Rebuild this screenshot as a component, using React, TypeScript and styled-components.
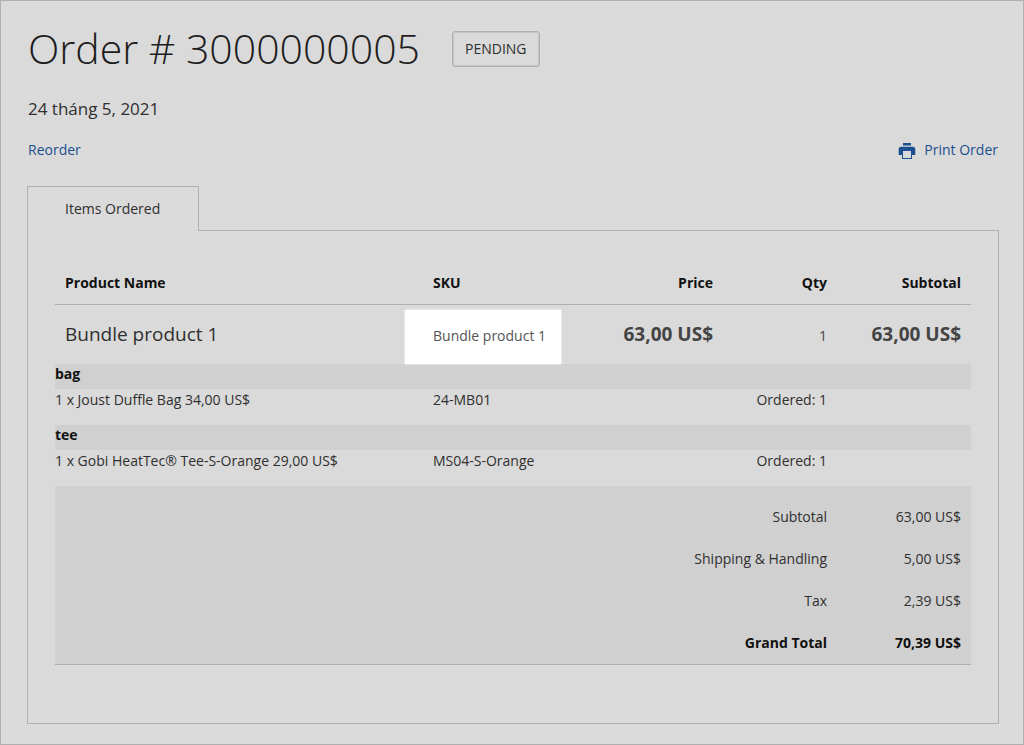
import React from "react";
import styled, { createGlobalStyle } from "styled-components";

const line = "#b0b0b0";
const shade = "#d0d0d0";
const link = "#1c4f8f";

const GlobalStyle = createGlobalStyle`
  *, *::before, *::after { box-sizing: border-box; }
  body {
    margin: 0;
    background: #dadada;
    color: #2f2f2f;
    font-family: "Open Sans", "Noto Sans", sans-serif;
    font-size: 14px;
    line-height: 22px;
  }
`;

const Page = styled.main`
  min-height: 100vh;
  padding: 19px 24px 20px 26px;
  border: 1px solid ${line};
`;

const Intro = styled.header`
  padding: 0 1px;
`;

const TitleRow = styled.div`
  display: flex;
  align-items: center;
  gap: 32px;
`;

const Title = styled.h1`
  margin: 0;
  padding-bottom: 2px;
  color: #1d1d1d;
  font-size: 41px;
  font-weight: 300;
  line-height: 56px;
`;

const Status = styled.span`
  padding: 5px 12px;
  border: 1px solid ${line};
  border-radius: 3px;
  box-shadow: inset 0 0 0 1px #c4c4c4;
  line-height: 24px;
  text-transform: uppercase;
`;

const OrderDate = styled.p`
  margin: 19px 0 18px;
  font-size: 17px;
  line-height: 24px;
`;

const Actions = styled.nav`
  display: flex;
  justify-content: space-between;
  align-items: center;
`;

const ActionLink = styled.a`
  display: inline-flex;
  align-items: center;
  gap: 7px;
  color: ${link};
  text-decoration: none;
`;

const PrintIcon = styled.svg`
  width: 20px;
  height: 20px;
  fill: currentColor;
`;

const Tabs = styled.div`
  display: flex;
  margin-top: 25px;
`;

const Tab = styled.button`
  height: 45px;
  margin-bottom: -1px;
  padding: 0 38px 0 37px;
  border: 1px solid ${line};
  border-bottom: 0;
  background: #dadada;
  color: inherit;
  font: inherit;
  z-index: 1;
`;

const Panel = styled.section`
  padding: 32px 27px 58px;
  border: 1px solid ${line};
`;

const OrderTable = styled.table`
  width: 100%;
  table-layout: fixed;
  border-collapse: collapse;
`;

const Col = styled.col<{ $width?: number }>`
  width: ${(p) => (p.$width ? `${p.$width}px` : "auto")};
`;

const HeadCell = styled.th<{ $end?: boolean }>`
  padding: 9px 10px 10px;
  border-bottom: 1px solid ${line};
  color: #111;
  font-weight: 700;
  text-align: ${(p) => (p.$end ? "right" : "left")};
`;

const ProductRow = styled.tr`
  height: 59px;
  vertical-align: baseline;
`;

const ProductCell = styled.td<{ $end?: boolean }>`
  padding: 16px 10px 17px;
  color: #444;
  text-align: ${(p) => (p.$end ? "right" : "left")};
`;

const ProductName = styled.strong`
  color: #2f2f2f;
  font-size: 19px;
  font-weight: 400;
  line-height: 26px;
`;

const Amount = styled.span`
  font-size: 19px;
  font-weight: 700;
  line-height: 26px;
`;

const Spotlight = styled.mark`
  position: relative;
  z-index: 0;
  background: none;
  color: #555;

  &::before {
    content: "";
    position: absolute;
    inset: -16px -15px -19px -28px;
    z-index: -1;
    background: #fff;
    box-shadow: 0 0 2px #fff;
  }
`;

const GroupCell = styled.th`
  height: 25px;
  padding: 0 0 5px;
  background: ${shade};
  color: #111;
  font-weight: 700;
  line-height: 20px;
  text-align: left;
`;

const OptionCell = styled.td<{ $inset?: boolean; $end?: boolean }>`
  height: 36px;
  padding: ${(p) => (p.$inset ? "0 10px 14px" : "0 0 14px")};
  text-align: ${(p) => (p.$end ? "right" : "left")};
  white-space: nowrap;
`;

const Totals = styled.tfoot`
  background: ${shade};
  border-bottom: 1px solid ${line};
`;

const TotalRow = styled.tr<{ $grand?: boolean }>`
  color: ${(p) => (p.$grand ? "#111" : "inherit")};
  font-weight: ${(p) => (p.$grand ? 700 : 400)};

  & > * {
    padding: 10px;
    font-weight: inherit;
    text-align: right;
  }

  &:first-child > * {
    padding-top: 20px;
  }
`;

const groups = [
  { label: "bag", item: "1 x Joust Duffle Bag 34,00 US$", sku: "24-MB01", qty: 1 },
  { label: "tee", item: "1 x Gobi HeatTec® Tee-S-Orange 29,00 US$", sku: "MS04-S-Orange", qty: 1 },
];

const totals = [
  { label: "Subtotal", value: "63,00 US$" },
  { label: "Shipping & Handling", value: "5,00 US$" },
  { label: "Tax", value: "2,39 US$" },
  { label: "Grand Total", value: "70,39 US$", grand: true },
];

export default function App() {
  return (
    <>
      <GlobalStyle />
      <Page>
        <Intro>
          <TitleRow>
            <Title>Order # 3000000005</Title>
            <Status>Pending</Status>
          </TitleRow>
          <OrderDate>24 tháng 5, 2021</OrderDate>
          <Actions>
            <ActionLink href="#reorder">Reorder</ActionLink>
            <ActionLink href="#print">
              <PrintIcon viewBox="0 0 20 20" aria-hidden="true">
                <path d="M6 3h8v2.500H6z" />
                <path
                  fillRule="evenodd"
                  d="M4 6.800h12c1.400 0 2.300 1 2.300 2.300V15H15v4H5v-4H1.700V9.100C1.700 7.800 2.600 6.800 4 6.800zM6 11v7h8v-7z"
                />
              </PrintIcon>
              Print Order
            </ActionLink>
          </Actions>
        </Intro>
        <Tabs>
          <Tab type="button">Items Ordered</Tab>
        </Tabs>
        <Panel>
          <OrderTable>
            <colgroup>
              <Col />
              <Col $width={170} />
              <Col $width={130} />
              <Col $width={114} />
              <Col $width={134} />
            </colgroup>
            <thead>
              <tr>
                <HeadCell scope="col">Product Name</HeadCell>
                <HeadCell scope="col">SKU</HeadCell>
                <HeadCell scope="col" $end>Price</HeadCell>
                <HeadCell scope="col" $end>Qty</HeadCell>
                <HeadCell scope="col" $end>Subtotal</HeadCell>
              </tr>
            </thead>
            <tbody>
              <ProductRow>
                <ProductCell><ProductName>Bundle product 1</ProductName></ProductCell>
                <ProductCell><Spotlight>Bundle product 1</Spotlight></ProductCell>
                <ProductCell $end><Amount>63,00 US$</Amount></ProductCell>
                <ProductCell $end>1</ProductCell>
                <ProductCell $end><Amount>63,00 US$</Amount></ProductCell>
              </ProductRow>
              {groups.map((g) => (
                <React.Fragment key={g.label}>
                  <tr>
                    <GroupCell colSpan={5} scope="colgroup">{g.label}</GroupCell>
                  </tr>
                  <tr>
                    <OptionCell>{g.item}</OptionCell>
                    <OptionCell $inset>{g.sku}</OptionCell>
                    <OptionCell />
                    <OptionCell $inset $end>Ordered: {g.qty}</OptionCell>
                    <OptionCell />
                  </tr>
                </React.Fragment>
              ))}
            </tbody>
            <Totals>
              {totals.map((t) => (
                <TotalRow key={t.label} $grand={t.grand}>
                  <th scope="row" colSpan={4}>{t.label}</th>
                  <td>{t.value}</td>
                </TotalRow>
              ))}
            </Totals>
          </OrderTable>
        </Panel>
      </Page>
    </>
  );
}
